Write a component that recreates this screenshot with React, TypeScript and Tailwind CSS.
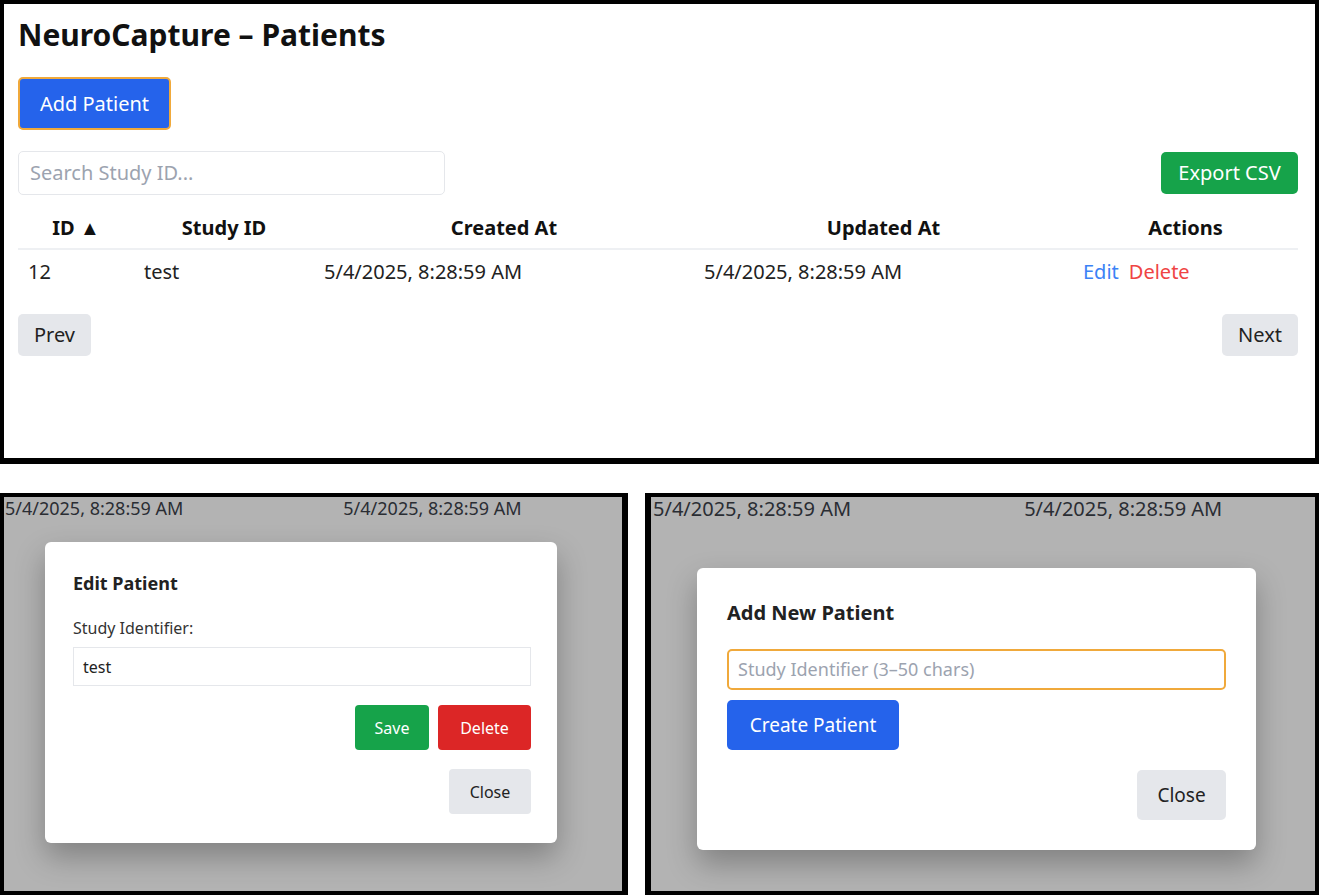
const dateText = '5/4/2025, 8:28:59 AM'

function PatientsPanel() {
  return (
    <div className="h-[464px] border-4 border-b-[6px] border-black bg-white px-[14px] pt-[12px]">
      <h1 className="text-[30px] leading-[38px] font-bold text-[#111]">NeuroCapture – Patients</h1>

      <button className="mt-[23px] h-[53px] w-[153px] rounded-[5px] border-2 border-[#f0a93b] bg-[#2563eb] text-[20px] text-white">
        Add Patient
      </button>

      <div className="mt-[21px] flex items-center justify-between pr-[3px]">
        <div className="flex h-[44px] w-[427px] items-center rounded-[5px] border border-[#e5e7eb] px-[11px] text-[20px] text-[#9ca3af]">
          Search Study ID...
        </div>
        <button className="h-[42px] w-[137px] rounded-[5px] bg-[#16a34a] text-[20px] text-white">
          Export CSV
        </button>
      </div>

      <table className="mt-[12px] w-[1280px] table-fixed border-collapse text-[20px]">
        <colgroup>
          <col className="w-[116px]" />
          <col className="w-[180px]" />
          <col className="w-[380px]" />
          <col className="w-[379px]" />
          <col className="w-[225px]" />
        </colgroup>
        <thead>
          <tr className="h-[42px] border-b-2 border-[#eef0f3]">
            <th className="text-center font-bold text-[#111]">ID ▲</th>
            <th className="text-center font-bold text-[#111]">Study ID</th>
            <th className="text-center font-bold text-[#111]">Created At</th>
            <th className="text-center font-bold text-[#111]">Updated At</th>
            <th className="text-center font-bold text-[#111]">Actions</th>
          </tr>
        </thead>
        <tbody>
          <tr className="h-[44px] text-[#222]">
            <td className="px-[10px]">12</td>
            <td className="px-[10px]">test</td>
            <td className="px-[10px]">{dateText}</td>
            <td className="px-[10px]">{dateText}</td>
            <td className="px-[10px]">
              <span className="text-[#3b82f6]">Edit</span>
              <span className="ml-[10px] text-[#ef4444]">Delete</span>
            </td>
          </tr>
        </tbody>
      </table>

      <div className="mt-[21px] flex items-center justify-between pr-[3px]">
        <button className="h-[42px] w-[73px] rounded-[5px] bg-[#e5e7eb] text-[20px] text-[#222]">Prev</button>
        <button className="h-[42px] w-[76px] rounded-[5px] bg-[#e5e7eb] text-[20px] text-[#222]">Next</button>
      </div>
    </div>
  )
}

function EditPatientPanel() {
  return (
    <div className="h-[402px] w-[628px] overflow-hidden border-4 border-r-[6px] border-black bg-[#b3b3b3]">
      <div className="flex h-[22px] items-center text-[18px] leading-none text-[#2a2d33]">
        <span className="ml-[1px]">{dateText}</span>
        <span className="ml-[160px]">{dateText}</span>
      </div>
      <div className="ml-[41px] mt-[23px] w-[512px] rounded-[6px] bg-white pl-[28px] pr-[26px] pt-[28px] pb-[29px] shadow-[0_14px_30px_rgba(0,0,0,0.28)]">
        <h2 className="text-[18px] leading-[26px] font-bold text-[#222]">Edit Patient</h2>
        <div className="mt-[21px] text-[16px] leading-[22px] text-[#333]">Study Identifier:</div>
        <div className="mt-[8px] flex h-[39px] items-center border border-[#e5e7eb] px-[9px] text-[16px] text-[#222]">
          test
        </div>
        <div className="mt-[19px] flex justify-end gap-[9px]">
          <button className="h-[45px] w-[74px] rounded-[4px] bg-[#16a34a] text-[16px] text-white">Save</button>
          <button className="h-[45px] w-[93px] rounded-[4px] bg-[#dc2626] text-[16px] text-white">Delete</button>
        </div>
        <div className="mt-[19px] flex justify-end">
          <button className="h-[45px] w-[82px] rounded-[4px] bg-[#e5e7eb] text-[16px] text-[#222]">Close</button>
        </div>
      </div>
    </div>
  )
}

function AddPatientPanel() {
  return (
    <div className="h-[402px] w-[674px] overflow-hidden border-4 border-l-[6px] border-black bg-[#b3b3b3]">
      <div className="flex h-[24px] items-center text-[20px] leading-none text-[#2a2d33]">
        <span className="ml-[2px]">{dateText}</span>
        <span className="ml-[173px]">{dateText}</span>
      </div>
      <div className="ml-[46px] mt-[47px] w-[559px] rounded-[6px] bg-white px-[30px] pt-[30px] pb-[30px] shadow-[0_14px_30px_rgba(0,0,0,0.28)]">
        <h2 className="text-[20px] leading-[30px] font-bold text-[#222]">Add New Patient</h2>
        <div className="mt-[21px] flex h-[41px] items-center rounded-[5px] border-2 border-[#f0a93b] px-[9px] text-[18px] text-[#9ca3af]">
          Study Identifier (3–50 chars)
        </div>
        <button className="mt-[10px] h-[50px] w-[172px] rounded-[5px] bg-[#2563eb] text-[19px] text-white">
          Create Patient
        </button>
        <div className="mt-[20px] flex justify-end">
          <button className="h-[50px] w-[89px] rounded-[5px] bg-[#e5e7eb] text-[19px] text-[#222]">Close</button>
        </div>
      </div>
    </div>
  )
}

export default function App() {
  return (
    <div className="h-[895px] w-[1319px] overflow-hidden bg-white font-['Noto_Sans',sans-serif]">
      <PatientsPanel />
      <div className="mt-[29px] flex gap-[17px]">
        <EditPatientPanel />
        <AddPatientPanel />
      </div>
    </div>
  )
}
